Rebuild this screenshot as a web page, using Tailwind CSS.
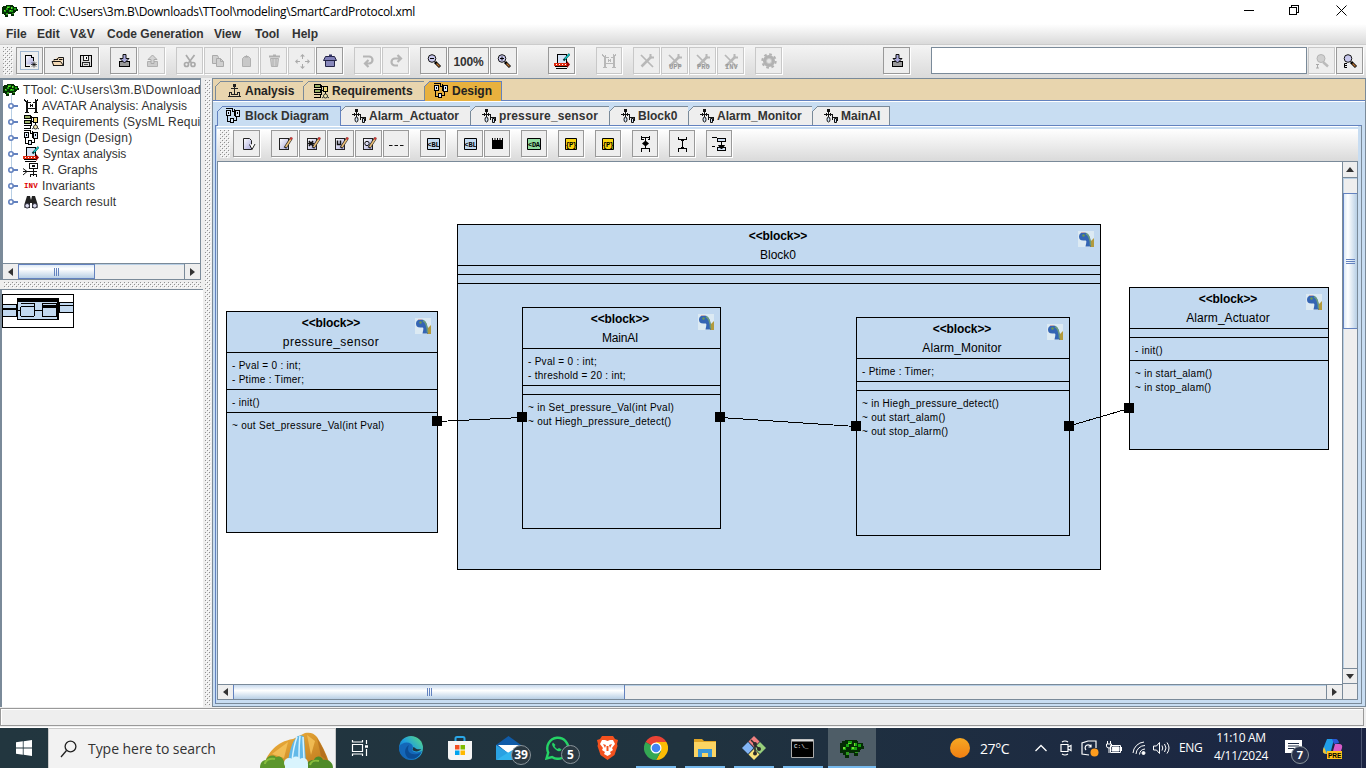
<!DOCTYPE html>
<html lang="en">
<head>
<meta charset="utf-8">
<title>TTool</title>
<script src="https://cdn.jsdelivr.net/npm/@tailwindcss/browser@4"></script>
</head>
<body class="w-[1366px] h-[768px] overflow-hidden bg-[#eeeeee] flex flex-col font-['Liberation_Sans',Arial,sans-serif] text-[12px] text-[#333]">

<svg width="0" height="0" class="absolute">
  <defs>
    <pattern id="bumps" width="4" height="4" patternUnits="userSpaceOnUse"><rect width="4" height="4" fill="#eee"/><rect x="0" y="0" width="1" height="1" fill="#909090"/><rect x="2" y="2" width="1" height="1" fill="#909090"/><rect x="1" y="1" width="1" height="1" fill="#fff"/><rect x="3" y="3" width="1" height="1" fill="#fff"/></pattern>
    <linearGradient id="lav" x1="0" y1="0" x2="1" y2="1"><stop offset="0" stop-color="#fff"/><stop offset="1" stop-color="#aaaadd"/></linearGradient>
    <linearGradient id="edge" x1="0" y1="1" x2="1" y2="0"><stop offset="0" stop-color="#0c59a4"/><stop offset=".5" stop-color="#1e9de0"/><stop offset="1" stop-color="#5fe07a"/></linearGradient>
    <linearGradient id="rock" x1="0" y1="0" x2="1" y2="1"><stop offset="0" stop-color="#f5b73f"/><stop offset="1" stop-color="#b9741b"/></linearGradient>
    <linearGradient id="sun" x1="0" y1="0" x2="0" y2="1"><stop offset="0" stop-color="#f7a823"/><stop offset="1" stop-color="#f07f13"/></linearGradient>
  </defs>
  <symbol id="turtle" viewBox="0 0 16 14"><g shape-rendering="crispEdges"><path d="M4 1h7v1h1v1h3v2h1v2h-2v1h-1v1h-1v3h-3v-2h-3v3h-3v-2h-1v-1h-3v-2h-1v-3h1v-2h2v-1h2z" fill="#042c04"/><path d="M5 2h3v2h-2v2h-2v-2h1zM9 3h2v2h-2zM7 6h4v2h-4zM2 6h2v2h-2zM12 4h2v2h-2z" fill="#17a010"/><path d="M5 3h2v1h-2zM9 3h1v2h-1zM8 6h1v1h-1zM2 6h1v1h-1z" fill="#6fe030"/><path d="M4 9h2v2h-2zM10 9h2v1h-2z" fill="#2c9a1c"/></g></symbol>
  <symbol id="new" viewBox="0 0 16 16"><path d="M3.500 2.500h6l2 2v7h-8z" fill="url(#lav)"/><g fill="none" stroke="#000" shape-rendering="crispEdges"><path d="M8 13.500H3.500V2.500h6v2h2V8"/></g><path d="M12 8.500v6M9 11.500h6M9.900 9.400l4.200 4.200M14.100 9.400l-4.200 4.200" stroke="#000" stroke-width=".7"/></symbol>
  <symbol id="open" viewBox="0 0 16 16"><path d="M2.500 12.500v-5l3-1 1-2h6v8z" fill="#f3d9b5"/><path d="M3 12.500h10.500v-8h-5l-1 1.500M3.500 12l-1.500-3.500h8.500l3 4M4 7.500V6.500h4M9 6.500h3.500" fill="none" stroke="#000" stroke-width=".9"/></symbol>
  <symbol id="save" viewBox="0 0 16 16"><g shape-rendering="crispEdges"><path d="M2 2h11l1 1v11h-12z" fill="#000"/><path d="M3 3h2v5h6v-5h2v10h-10z" fill="#ddd"/><path d="M5 3h1v4h-1zM10 3h1v4h-1zM5 7h6v1h-6zM4 9h8v1h-8zM4 9h1v4h-1zM11 9h1v4h-1z" fill="#222"/><path d="M6 3h4v4h-4z" fill="#f4f4f4"/><path d="M8 4h1v2h-1z" fill="#000"/><path d="M6 11h4v1h-4z" fill="#555"/></g></symbol>
  <symbol id="import" viewBox="0 0 16 16"><path d="M3.500 8.500h10v5h-10z" fill="#999" stroke="#000" shape-rendering="crispEdges"/><path d="M7 1.500h3v4h3L8.500 10 4 5.500h3z" fill="#aaaadd" stroke="#111"/></symbol>
  <symbol id="export" viewBox="0 0 16 16"><path d="M3.500 8.500h10v5h-10z" fill="#ccc" stroke="#b0b0b0"/><path d="M7 10.500h3v-4h3L8.500 2 4 6.500h3z" fill="#d4d4d4" stroke="#aaa"/></symbol>
  <symbol id="cut" viewBox="0 0 16 16"><g fill="none" stroke="#aaa" stroke-width="1.700"><path d="M4 2l5.500 8M12.500 2L6.500 10"/><circle cx="4.500" cy="11.500" r="2"/><circle cx="11" cy="11.500" r="2"/></g></symbol>
  <symbol id="copy" viewBox="0 0 16 16"><g fill="#d0d0d0" stroke="#aaa"><path d="M2.500 2.500h5l1 2v6h-6z"/><path d="M6.500 5.500h4l3 3v5h-7z"/><path d="M10.500 5.500v3h3" fill="none"/></g></symbol>
  <symbol id="paste" viewBox="0 0 16 16"><path d="M4.500 5.500l2-2h4l2 2v8h-8z" fill="#c8c8c8" stroke="#b0b0b0"/><path d="M6.500 4.500l2-2.500 2 2.500z" fill="#aaa"/></symbol>
  <symbol id="trash" viewBox="0 0 16 16"><path d="M3 3.500h11M7 2.500h3" stroke="#b0b0b0" stroke-width="2"/><path d="M4.500 5.500h8l-1 8h-6zM7 6v7M10 6v7" fill="#d0d0d0" stroke="#b0b0b0"/></symbol>
  <symbol id="move" viewBox="0 0 16 16"><path d="M8.500 1l2.500 2.500h-2v2.500h-1V3.500H6zM8.500 16L6 13.500h2V11h1v2.500h2zM1 8.500L3.500 6v2H6v1H3.500v2zM16 8.500L13.500 11V9H11V8h2.500V6z" fill="#aaa"/></symbol>
  <symbol id="house" viewBox="0 0 16 16"><path d="M3.500 7.500h9v6h-9z" fill="#8888bb" stroke="#222244"/><path d="M3.500 3.500h9l2 4H1.500z" fill="#8080b8" stroke="#222244"/><path d="M7 1.500h3v2H7z" fill="#333366"/></symbol>
  <symbol id="undo" viewBox="0 0 16 16"><path d="M3 3.500h6a3.500 3.500 0 0 1 0 7H6M8.500 7L5 10.500l3.500 3.500" fill="none" stroke="#b5b5b5" stroke-width="2.200"/></symbol>
  <symbol id="redo" viewBox="0 0 16 16"><path d="M10 12.500H7a3.500 3.500 0 0 1 0-7h5M9.500 2L13 5.500 9.500 9" fill="none" stroke="#b5b5b5" stroke-width="2.200"/></symbol>
  <symbol id="lens" viewBox="0 0 16 16"><path d="M9 9l5 5" stroke="#000" stroke-width="3"/><path d="M10.500 10.500l3 3" stroke="#b87333" stroke-width="1.400"/><circle cx="6" cy="5.500" r="3.800" fill="#c8c8ee" stroke="#111"/></symbol>
  <symbol id="lensg" viewBox="0 0 16 16"><path d="M9 9l5 4.500" stroke="#bbb" stroke-width="2.500"/><circle cx="7" cy="5.500" r="4" fill="#d0d0d0" stroke="#b5b5b5"/></symbol>
  <symbol id="syntax" viewBox="0 0 16 16"><g shape-rendering="crispEdges"><path d="M3.500 1.500h9v9h-9z" fill="#d5e3f5" stroke="#000"/><path d="M0 10h14v3h-14z" fill="#e02a10"/><path d="M1 13h13v1h-13zM2 15h11v1h-11z" fill="#000"/><path d="M2 11h1v1h-1zM5 11h1v1h-1zM8 11h1v1h-1zM11 11h1v1h-1z" fill="#fff"/></g><path d="M13 8l3 3.500-3 3.500z" fill="#900"/><path d="M15.500 1L9.500 7.500" stroke="#033" stroke-width="2"/><path d="M15.500 1l-4.500 5" stroke="#12c4c4" stroke-width="1.500"/></symbol>
  <symbol id="gate" viewBox="0 0 16 16"><g fill="currentColor" shape-rendering="crispEdges"><path d="M3 4h2v11h-2zM12 4h2v11h-2zM1 1h1v1h1v1h1v-1h1v2h-3v-1h-1zM12 1h1v1h1v-1h1v2h-1v1h-2zM2 14h4v1h-4zM11 14h4v1h-4zM5 10h7v1h-7zM5 4h3v1h-3zM7 6h1v3h-1zM9 6h1v3h-1zM8 7h1v1h-1zM10 4h2v1h-2z"/></g></symbol>
  <symbol id="tools" viewBox="0 0 16 16"><g fill="none" stroke="#b8b8b8"><path d="M2 2l12 12" stroke-width="1.700"/><path d="M12.500 3.500L2.500 13.500" stroke-width="2.500"/><path d="M11.500 1v3.500H15" stroke-width="2"/></g></symbol>
  <symbol id="gear" viewBox="0 0 16 16"><circle cx="8" cy="8" r="4.500" fill="#c8c8c8" stroke="#b2b2b2" stroke-width="3"/><circle cx="8" cy="8" r="6.700" fill="none" stroke="#b2b2b2" stroke-width="2" stroke-dasharray="2.700 2.560"/><circle cx="8" cy="8" r="2" fill="#e4e4e4"/></symbol>
  <symbol id="req" viewBox="0 0 16 16"><g shape-rendering="crispEdges" stroke="#000"><path d="M1.500 1.500h6v3h-6zM1.500 6.500h6v3h-6z" fill="#9bb06a"/><path d="M1 11.500h6v3h-6M8.500 2v10" fill="none"/><path d="M10.500 3.500h4v5h-4z" fill="#f0d878"/><path d="M8 3.500h2M8 7.500h2M12.500 9v2" fill="none"/></g><circle cx="12.500" cy="13" r="2" fill="#f6e9b0" stroke="#333"/><path d="M9 15l2-1.500M16 15l-2-1.500" stroke="#333"/></symbol>
  <symbol id="design" viewBox="0 0 16 16"><g shape-rendering="crispEdges" stroke="#000" fill="#dbe8f8"><path d="M1.500 2.500h4v5h-4zM10.500 2.500h4v6h-4zM5.500 10.500h3v4h-3z"/><path d="M1 .5h6v3M3.500 4v2M12.500 4v2M7 3.500h3M9.500 1v7M11.500 9v3h-3M2.500 8v5h3M14.500 8v1" fill="none"/></g></symbol>
  <symbol id="analysis" viewBox="0 0 16 16"><g fill="none" stroke="#222" shape-rendering="crispEdges"><path d="M8.500 2v9M5 5.500h7"/><path d="M3.500 13.500v-4h2v2h6v-2h2v4zM2 13.500h13"/></g><path d="M7 1h3v3h-3z" fill="#222"/></symbol>
  <symbol id="smd" viewBox="0 0 16 16"><g shape-rendering="crispEdges"><path d="M4 1h3v3h-3zM5 3h1v7h-1zM1 6h9v1h-9zM3 5h1v3h-1zM7 5h1v3h-1zM9 7h1v2h-1zM9 9h6v1h-6zM14 9h1v4h-1zM9 10h1v2h-1z" fill="#111"/></g><ellipse cx="5.500" cy="11.500" rx="1.500" ry="2.500" fill="#cfe0f4" stroke="#111"/><path d="M11.500 10.500h2v4h-2z" fill="#cfe0f4" stroke="#111"/></symbol>
  <symbol id="graph" viewBox="0 0 16 16"><g fill="none" stroke="#111"><path d="M6.500 1.500h8v5h-8zM10.500 7v7M5 9.500h9M7.500 15v-2.500h6v2.500" shape-rendering="crispEdges"/><path d="M0 6.500l4 3-4 3.500M0 9.500h5"/></g><path d="M9 3h3v2h-3z" fill="#111"/></symbol>
  <symbol id="bino" viewBox="0 0 16 16"><path d="M4 2h3l1 4 1-4h3l2.500 8v4H9V9H7v5H1.500V10z" fill="#222"/><circle cx="4.200" cy="11.800" r="2.300" fill="#dde" stroke="#334"/><circle cx="11.800" cy="11.800" r="2.300" fill="#dde" stroke="#334"/></symbol>
  <symbol id="knob" viewBox="0 0 16 16"><path d="M5 8h6" stroke="#6382bf" stroke-width="2"/><circle cx="4" cy="8" r="2.200" fill="#fff" stroke="#6382bf" stroke-width="1.600"/></symbol>
  <symbol id="doccheck" viewBox="0 0 16 16"><path d="M3.500 2.500h6l2 2v9h-8z" fill="url(#lav)" stroke="#222"/><path d="M9.500 8.500l2.500 5L15 8" fill="#fff" stroke="#222"/></symbol>
  <symbol id="edit" viewBox="0 0 16 16"><path d="M2.500 2.500h9v11h-9z" fill="url(#lav)" stroke="#222" shape-rendering="crispEdges"/><path d="M14.500 2L8 12" stroke="#222" stroke-width="3"/><path d="M14 3L8.700 11" stroke="#ecc078" stroke-width="1.600"/><path d="M15 1.500l-1.500 2" stroke="#c33" stroke-width="2"/></symbol>
  <symbol id="dots" viewBox="0 0 16 16"><path d="M1 9.500h3.500M6.500 9.500H10M12 9.500h3.500" stroke="#111"/></symbol>
  <symbol id="libbox" viewBox="0 0 16 16"><path d="M3 2v2M5.500 2v2M8 2v2M10.500 2v2M13 2v2" stroke="#000" transform="translate(.5 0)"/><path d="M3 4h11v9h-11z" fill="#000"/></symbol>
  <symbol id="compo" viewBox="0 0 16 16"><g fill="none" stroke="#000" shape-rendering="crispEdges"><path d="M4.500 0v3.500h2M12.500 0v3.500h-2M4.500 16v-3.500h2M12.500 16v-3.500h-2M4 1.500h8M5 12.500h8M8.500 2v11"/></g><path d="M5 7.500L8.500 4.500 12 7.500 8.500 10.500z" fill="#000"/></symbol>
  <symbol id="link" viewBox="0 0 16 16"><g fill="none" stroke="#000" shape-rendering="crispEdges"><path d="M4.500 1v2.500h8V1M4.500 16v-3.500h8V16M8.500 3v10"/></g><path d="M7 3h3v2h-3zM7 11h3v2h-3z" fill="#000"/></symbol>
  <symbol id="port" viewBox="0 0 16 16"><g fill="#cfe0f4" stroke="#000" shape-rendering="crispEdges"><path d="M6.500 2.500h8v3h-8zM6.500 11.500h8v3h-8zM1 1.500h3M1 10.500h3M2 1.500h4"/></g><path d="M10.500 6v7M7.500 9.500l3 3.500 3-3.500z" stroke="#000" fill="#000"/></symbol>
  <symbol id="dino" viewBox="0 0 16 16"><path d="M0 0h16v16h-16z" fill="#dceaf3"/><path d="M12 11l4-4v9h-4z" fill="#b39a3c"/><path d="M1 5.500C1 2 4 1 6.500 1.500c4 .5 6 3.500 6.500 14H7.500C8.500 11 9 9.500 7 9.500 2.500 10 1 8.500 1 5.500z" fill="#3465b4"/><path d="M8 2.500c3.500 2 4.500 5 4.500 12" fill="none" stroke="#6a9b7d" stroke-width="1.500"/><circle cx="5.500" cy="4.500" r="1.200" fill="#6f9a4a"/><path d="M3 1.500h4" stroke="#d0a7a7" stroke-width=".8"/></symbol>
</svg>

<!-- window title -->
<header class="h-6 shrink-0 bg-white flex items-center pl-[2px] text-black">
  <svg class="w-4 h-[14px] mr-[5px] mb-[2px]"><use href="#turtle"/></svg>
  <span class="font-['Open_Sans','Noto_Sans',sans-serif] text-[12px] tracking-[-0.28px] whitespace-nowrap">TTool: C:\Users\3m.B\Downloads\TTool\modeling\SmartCardProtocol.xml</span>
  <div class="ml-auto flex items-center pb-[4px] pr-[19px]">
    <svg class="mr-[35px]" width="10" height="11"><path d="M0 5.500h10" stroke="#000"/></svg>
    <svg class="mr-[36px]" width="11" height="11" fill="none" stroke="#000" shape-rendering="crispEdges"><path d="M.5 2.500h7v7h-7zM2.500 2V.5h7v7H8"/></svg>
    <svg width="11" height="11" stroke="#000"><path d="M.5.5l10 10M10.500.5l-10 10"/></svg>
  </div>
</header>

<!-- menu -->
<nav class="h-[21px] shrink-0 border-b border-[#ccc] bg-linear-to-b from-white to-[#dadada] font-bold flex items-center pl-[6px] whitespace-nowrap">
  <span class="w-[31px]">File</span><span class="w-[33px]">Edit</span><span class="w-[37px]">V&amp;V</span><span class="w-[107px]">Code Generation</span><span class="w-[41px]">View</span><span class="w-[37px]">Tool</span><span>Help</span>
</nav>

<!-- main toolbar -->
<div class="h-[33px] shrink-0 bg-linear-to-b from-[#f4f4f4] to-[#dadada] flex items-start pt-[2px] gap-px [&>b]:h-[27px] [&>b]:w-[27px] [&>b]:shrink-0 [&>b]:flex [&>b]:items-center [&>b]:justify-center [&>b]:border [&>b]:border-[#999] [&>b]:bg-[#eee] [&>b]:shadow-[1px_1px_0_#fff] [&>b.off]:border-[#c8c8c8] [&_svg]:size-4 [&_svg]:overflow-visible [&>i]:shrink-0 [&>i]:w-[9px]">
  <div class="w-[15px] h-[28px] shrink-0 pl-[3px]"><svg class="w-[10px]! h-[28px]!"><rect width="10" height="28" fill="url(#bumps)"/></svg></div>
  <b><span class="size-[19px] border border-[#9fb6d0] flex items-center justify-center"><svg><use href="#new"/></svg></span></b>
  <b><svg><use href="#open"/></svg></b>
  <b><svg><use href="#save"/></svg></b><i></i>
  <b><svg><use href="#import"/></svg></b>
  <b class="off"><svg><use href="#export"/></svg></b><i></i>
  <b class="off"><svg><use href="#cut"/></svg></b>
  <b class="off"><svg><use href="#copy"/></svg></b>
  <b class="off"><svg><use href="#paste"/></svg></b>
  <b class="off"><svg><use href="#trash"/></svg></b>
  <b class="off"><svg><use href="#move"/></svg></b>
  <b><svg><use href="#house"/></svg></b><i></i>
  <b class="off"><svg><use href="#undo"/></svg></b>
  <b class="off"><svg><use href="#redo"/></svg></b><i></i>
  <b><svg viewBox="0 0 16 16"><use href="#lens"/><path d="M4 5.500h4" stroke="#000"/></svg></b>
  <b class="w-[41px]! text-[12px] tracking-[-0.2px] pt-[2px]">100%</b>
  <b><svg viewBox="0 0 16 16"><use href="#lens"/><path d="M4 5.500h4M6 3.500v4" stroke="#000"/></svg></b><i class="w-[29px]!"></i>
  <b><svg><use href="#syntax"/></svg></b><i class="w-[19px]!"></i>
  <b class="off w-[26px]! text-[#b8b8b8]"><svg><use href="#gate"/></svg></b><i></i>
  <b class="off"><svg><use href="#tools"/></svg></b>
  <b class="off"><svg viewBox="0 0 16 16"><use href="#tools"/><text x="2" y="15.500" font-family="Liberation Mono" font-size="7" fill="#999">UPP</text></svg></b>
  <b class="off"><svg viewBox="0 0 16 16"><use href="#tools"/><text x="2" y="15.500" font-family="Liberation Mono" font-size="7" fill="#999">PRO</text></svg></b>
  <b class="off"><svg viewBox="0 0 16 16"><use href="#tools"/><text x="2" y="15.500" font-family="Liberation Mono" font-size="7" fill="#999">INV</text></svg></b><i></i>
  <b class="off"><svg><use href="#gear"/></svg></b><i class="w-[99px]!"></i>
  <b><svg><use href="#import"/></svg></b><i class="w-[19px]!"></i>
  <div class="w-[376px] h-[27px] shrink-0 bg-white border border-[#7a8a99]"></div>
  <b class="off"><svg viewBox="0 0 16 16"><use href="#lensg"/><path d="M2 11.500h3M3.500 11v4M2 15h3" stroke="#aaa"/></svg></b>
  <b><svg viewBox="0 0 16 16"><use href="#lens"/><path d="M5 10.500H2.500v4H5M2.500 12.500H5" stroke="#000" fill="none"/></svg></b>
</div>

<main class="h-[629px] shrink-0 flex">
  <!-- project tree and overview -->
  <aside class="w-[203px] flex flex-col shrink-0">
    <div class="h-[202px] w-[201px] border-l-[3px] border-t-2 border-r border-b border-[#7a8a99] bg-white flex flex-col">
      <div class="flex-1 overflow-hidden pt-[2px] whitespace-nowrap tracking-[0.1px] [&>div]:h-4 [&>div]:flex [&>div]:items-center [&_svg]:size-4 [&_svg]:shrink-0 [&_span]:ml-[3px]">
        <div><svg><use href="#turtle"/></svg><span class="ml-[4px]! tracking-[0.25px]">TTool: C:\Users\3m.B\Download</span></div>
        <div class="pl-[4px] relative before:absolute before:left-[8px] before:top-[-4px] before:h-[106px] before:w-px before:bg-[#b8cfe5] [&>svg]:relative"><svg><use href="#knob"/></svg><svg class="text-[#111]"><use href="#gate"/></svg><span>AVATAR Analysis: Analysis</span></div>
        <div class="pl-[4px] [&>svg]:relative"><svg><use href="#knob"/></svg><svg><use href="#req"/></svg><span class="tracking-[0.22px]">Requirements (SysML Requi</span></div>
        <div class="pl-[4px] [&>svg]:relative"><svg><use href="#knob"/></svg><svg><use href="#design"/></svg><span class="tracking-[0.3px]">Design (Design)</span></div>
        <div class="pl-[4px] [&>svg]:relative"><svg><use href="#knob"/></svg><svg><use href="#syntax"/></svg><span class="ml-[4px]! tracking-[0px]">Syntax analysis</span></div>
        <div class="pl-[4px] [&>svg]:relative"><svg><use href="#knob"/></svg><svg><use href="#graph"/></svg><span>R. Graphs</span></div>
        <div class="pl-[4px] [&>svg]:relative"><svg><use href="#knob"/></svg><svg viewBox="0 0 16 16"><text x="1" y="9.500" font-family="Liberation Mono" font-weight="bold" font-size="7.500" fill="#d00">INV</text></svg><span>Invariants</span></div>
        <div class="pl-[4px] [&>svg]:relative"><svg><use href="#knob"/></svg><svg><use href="#bino"/></svg><span class="ml-[4px]! tracking-[0.2px]">Search result</span></div>
      </div>
      <div class="h-[16px] border-t border-[#7a8a99] flex bg-[#eee]">
        <div class="w-[15px] flex items-center justify-center"><svg width="5" height="8"><path d="M5 0v8L0 4z" fill="#333"/></svg></div>
        <div class="w-[77px] border border-[#6382bf] bg-linear-to-b from-[#dce9f6] via-white via-30% to-[#b8cfe5] flex items-center justify-center gap-px"><i class="w-px h-2 bg-[#6382bf]"></i><i class="w-px h-2 bg-[#6382bf]"></i><i class="w-px h-2 bg-[#6382bf]"></i></div>
        <div class="flex-1 border-t border-[#b8cfe5]"></div>
        <div class="w-[16px] border-l border-[#7a8a99] flex items-center justify-center"><svg width="5" height="8"><path d="M0 0v8l5-4z" fill="#333"/></svg></div>
      </div>
    </div>
    <div class="h-[9px] pl-1 pt-[2px]"><svg class="block" width="197" height="6"><rect width="197" height="6" fill="url(#bumps)"/></svg></div>
    <div class="flex-1 border-t border-l-2 border-[#7a8a99] bg-white pt-[4px]">
      <svg class="block" width="72" height="34" shape-rendering="crispEdges"><rect x=".5" y=".5" width="71" height="33" fill="#fff" stroke="#000"/><g fill="#c2d9f0" stroke="#000"><path d="M.5 10.500h14v12h-14zM15.500 4.500h41v21h-41zM40.500 9.500h14v13h-14zM57.500 8.500h14v10h-14z"/></g><path d="M15 5h42v3h-42zM0 14h14v2h-14zM40 11h15v3h-15zM55 4h2v22h-2z"/><path d="M0 10.500h14M19 9.500h13M19 12.500h13M18.500 13v9M32.500 9v13M19 22.500h13M14 16.500h5M32 16.500h8M55 15.500h3M58 11.500h14" stroke="#000" fill="none"/></svg>
    </div>
  </aside>
  <div class="w-[9px] shrink-0 pl-[2px] pt-[2px]"><svg class="block" width="6" height="625"><rect width="6" height="625" fill="url(#bumps)"/></svg></div>

  <section class="flex-1 border border-[#7a8a99] bg-[#c8ddf2] flex flex-col">
    <!-- diagram family tabs -->
    <div class="h-[22px] shrink-0 bg-[#e8d5ae] border-b border-[#6382bf] pl-[2px] pt-[2px] flex text-[12px] font-bold text-[#222] [&>div]:relative [&>div]:flex [&>div]:items-center [&>div]:border-t [&>div]:border-r [&>div]:border-[#7a8a99] [&>div]:whitespace-nowrap">
      <div class="w-[89px] pl-[10px] gap-[3px] border-l"><svg class="absolute -left-px -top-px" width="6" height="6"><path d="M0 0h6L0 6z" fill="#e8d5ae"/><path d="M0 6l6-6" stroke="#7a8a99"/></svg><svg width="16" height="16"><use href="#analysis"/></svg>Analysis</div>
      <div class="w-[121px] pl-[9px] gap-[3px] tracking-[0.05px]"><svg class="absolute -left-px -top-px" width="6" height="6"><path d="M0 0h6L0 6z" fill="#e8d5ae"/><path d="M0 6l6-6" stroke="#7a8a99"/></svg><svg width="16" height="16"><use href="#req"/></svg>Requirements</div>
      <div class="w-[77px] pl-[8px] pb-px gap-[3px] bg-[#e8b13e] border-[#6382bf]! -mb-px"><svg class="absolute -left-px -top-px" width="6" height="6"><path d="M0 0h6L0 6z" fill="#e8d5ae"/><path d="M0 6l6-6" stroke="#6382bf"/></svg><svg width="16" height="16"><use href="#design"/></svg>Design</div>
    </div>
    <!-- diagram tabs -->
    <div class="h-[24px] shrink-0 border-t border-white pt-[4px] pl-[4px] flex text-[12px] font-bold text-[#333] [&>div]:relative [&>div]:flex [&>div]:items-center [&>div]:border-t [&>div]:border-r [&>div]:border-[#7a8a99] [&>div]:bg-[#eee] [&>div]:pl-[10px] [&>div]:gap-[2px] [&>div]:whitespace-nowrap">
      <div class="w-[124px] border-l border-[#6382bf]! bg-[#c8ddf2]! pl-[7px]! gap-[4px]! pb-px z-10 -mb-px"><svg class="absolute -left-px -top-px" width="6" height="6"><path d="M0 0h6L0 6z" fill="#c8ddf2"/><path d="M0 6l6-6" stroke="#6382bf"/></svg><svg width="16" height="16"><use href="#design"/></svg>Block Diagram</div>
      <div class="w-[130px]"><svg class="absolute -left-px -top-px" width="6" height="6"><path d="M0 0h6L0 6z" fill="#c8ddf2"/><path d="M0 6l6-6" stroke="#7a8a99"/></svg><svg width="16" height="16"><use href="#smd"/></svg>Alarm_Actuator</div>
      <div class="w-[139px] tracking-[0.15px]"><svg class="absolute -left-px -top-px" width="6" height="6"><path d="M0 0h6L0 6z" fill="#c8ddf2"/><path d="M0 6l6-6" stroke="#7a8a99"/></svg><svg width="16" height="16"><use href="#smd"/></svg>pressure_sensor</div>
      <div class="w-[79px]"><svg class="absolute -left-px -top-px" width="6" height="6"><path d="M0 0h6L0 6z" fill="#c8ddf2"/><path d="M0 6l6-6" stroke="#7a8a99"/></svg><svg width="16" height="16"><use href="#smd"/></svg>Block0</div>
      <div class="w-[124px]"><svg class="absolute -left-px -top-px" width="6" height="6"><path d="M0 0h6L0 6z" fill="#c8ddf2"/><path d="M0 6l6-6" stroke="#7a8a99"/></svg><svg width="16" height="16"><use href="#smd"/></svg>Alarm_Monitor</div>
      <div class="w-[77px]"><svg class="absolute -left-px -top-px" width="6" height="6"><path d="M0 0h6L0 6z" fill="#c8ddf2"/><path d="M0 6l6-6" stroke="#7a8a99"/></svg><svg width="16" height="16"><use href="#smd"/></svg>MainAI</div>
    </div>
    <div class="h-[579px] ml-[2px] mr-[3px] border border-[#6382bf] border-r-[#7a8a99] border-b-[#7a8a99] flex flex-col pl-px pr-[3px]">
      <div class="h-[3px] shrink-0 border-t border-white"></div>
      <div class="h-[32px] shrink-0 bg-linear-to-b from-white to-[#dadada] flex pt-[1px] gap-px [&>b]:h-[27px] [&>b]:w-[26px] [&>b]:shrink-0 [&>b]:flex [&>b]:items-center [&>b]:justify-center [&>b]:border [&>b]:border-[#999] [&>b]:bg-[#eee] [&>b]:shadow-[1px_1px_0_#fff] [&_svg]:size-4 [&>i]:shrink-0 [&>i]:w-[9px]">
        <div class="w-[15px] shrink-0 pl-[3px]"><svg class="w-[10px]! h-[28px]!"><rect width="10" height="28" fill="url(#bumps)"/></svg></div>
        <b class="w-[27px]!"><svg class="ml-[2px]"><use href="#doccheck"/></svg></b><i></i>
        <b class="w-[27px]!"><svg><use href="#edit"/></svg></b>
        <b class="w-[27px]!"><svg viewBox="0 0 16 16"><use href="#edit"/><path d="M4 5l4 5M8 5l-4 5M3 7.500h6" stroke="#111" stroke-width="1.500"/></svg></b>
        <b class="w-[27px]!"><svg viewBox="0 0 16 16"><use href="#edit"/><path d="M4.500 4.500v4h3v-4" stroke="#111" fill="none" stroke-width="1.500"/></svg></b>
        <b class="w-[27px]!"><svg viewBox="0 0 16 16"><use href="#edit"/><circle cx="6" cy="7.500" r="2.200" stroke="#111" fill="none"/></svg></b>
        <b><svg><use href="#dots"/></svg></b><i></i>
        <b><svg viewBox="0 0 16 16"><path d="M2.500 2.500h12v11h-12z" fill="#c2d9f0" stroke="#000"/><text x="2.600" y="10.500" font-family="Liberation Mono" font-weight="bold" font-size="7" textLength="12">&lt;BL</text></svg></b><i></i>
        <b><svg viewBox="0 0 16 16"><path d="M2.500 2.500h12v11h-12z" fill="#c2d9f0" stroke="#000"/><text x="2.600" y="10.500" font-family="Liberation Mono" font-weight="bold" font-size="7" textLength="12">&lt;BL</text></svg></b>
        <b><svg><use href="#libbox"/></svg></b><i></i>
        <b><svg viewBox="0 0 16 16"><path d="M1.500 2.500h13v11h-13z" fill="#90dca0" stroke="#000"/><text x="2" y="10.500" font-family="Liberation Mono" font-weight="bold" font-size="7" textLength="12">&lt;DA</text></svg></b><i></i>
        <b><svg viewBox="0 0 16 16"><path d="M2.500 2.500h11v11h-11z" fill="#f8d410" stroke="#000"/><text x="2.600" y="10.500" font-family="Liberation Mono" font-weight="bold" font-size="7" textLength="11">{P}</text></svg></b><i></i>
        <b><svg viewBox="0 0 16 16"><path d="M2.500 2.500h11v11h-11z" fill="#f8d410" stroke="#000"/><text x="2.600" y="10.500" font-family="Liberation Mono" font-weight="bold" font-size="7" textLength="11">{P}</text></svg></b><i></i>
        <b><svg><use href="#compo"/></svg></b><i></i>
        <b><svg><use href="#link"/></svg></b><i></i>
        <b><svg><use href="#port"/></svg></b>
      </div>
      <div class="flex-1 border border-[#7a8a99] flex flex-col bg-[#eee]">
        <div class="h-[522px] flex">
          <!-- block diagram canvas -->
          <div class="w-[1124px] bg-white relative text-black overflow-hidden [&_h3]:font-bold [&_h3]:text-[12px] [&_h3]:leading-[19px] [&_h3]:tracking-[-0.1px] [&_h4]:text-[12px] [&_h4]:leading-[19px] [&_p]:text-[10px] [&_p]:leading-[14px] [&_p]:tracking-[0.28px] [&_p]:whitespace-pre">
            <div class="absolute left-[239px] top-[62px] w-[644px] h-[346px] border border-black bg-[#c2d9f0] text-center">
              <svg class="absolute right-[6px] top-[6px] size-4"><use href="#dino"/></svg>
              <div class="h-[41px] border-b border-black pt-[2px] pr-[2px]"><h3>&lt;&lt;block&gt;&gt;</h3><h4>Block0</h4></div><div class="h-[9px] border-b border-black"></div><div class="h-[9px] border-b border-black"></div>
            </div>
            <div class="absolute left-[8px] top-[149px] w-[212px] h-[222px] border border-black bg-[#c2d9f0]">
              <svg class="absolute right-[6px] top-[6px] size-4"><use href="#dino"/></svg>
              <div class="h-[41px] border-b border-black pt-[2px] text-center pr-[2px]"><h3>&lt;&lt;block&gt;&gt;</h3><h4 class="tracking-[0.47px]">pressure_sensor</h4></div>
              <div class="h-[37px] border-b border-black pl-[5px] pt-[6px]"><p>- Pval = 0 : int;</p><p>- Ptime : Timer;</p></div>
              <div class="h-[23px] border-b border-black pl-[5px] pt-[6px]"><p>- init()</p></div>
              <div class="pl-[5px] pt-[6px]"><p>~ out Set_pressure_Val(int Pval)</p></div>
            </div>
            <div class="absolute left-[304px] top-[145px] w-[199px] h-[222px] border border-black bg-[#c2d9f0]">
              <svg class="absolute right-[6px] top-[6px] size-4"><use href="#dino"/></svg>
              <div class="h-[41px] border-b border-black pt-[2px] text-center pr-[3px]"><h3>&lt;&lt;block&gt;&gt;</h3><h4 class="tracking-[-0.2px]">MainAI</h4></div>
              <div class="h-[37px] border-b border-black pl-[5px] pt-[6px]"><p>- Pval = 0 : int;</p><p>- threshold = 20 : int;</p></div>
              <div class="h-[9px] border-b border-black"></div>
              <div class="pl-[5px] pt-[6px]"><p>~ in Set_pressure_Val(int Pval)</p><p>~ out Hiegh_pressure_detect()</p></div>
            </div>
            <div class="absolute left-[638px] top-[155px] w-[214px] h-[219px] border border-black bg-[#c2d9f0]">
              <svg class="absolute right-[6px] top-[6px] size-4"><use href="#dino"/></svg>
              <div class="h-[41px] border-b border-black pt-[2px] text-center pr-[2px]"><h3>&lt;&lt;block&gt;&gt;</h3><h4 class="tracking-[0.1px]">Alarm_Monitor</h4></div>
              <div class="h-[23px] border-b border-black pl-[5px] pt-[6px]"><p>- Ptime : Timer;</p></div>
              <div class="h-[9px] border-b border-black"></div>
              <div class="pl-[5px] pt-[6px]"><p>~ in Hiegh_pressure_detect()</p><p>~ out start_alam()</p><p>~ out stop_alarm()</p></div>
            </div>
            <div class="absolute left-[911px] top-[125px] w-[200px] h-[163px] border border-black bg-[#c2d9f0]">
              <svg class="absolute right-[6px] top-[6px] size-4"><use href="#dino"/></svg>
              <div class="h-[41px] border-b border-black pt-[2px] text-center pr-[2px]"><h3>&lt;&lt;block&gt;&gt;</h3><h4 class="tracking-[0.05px]">Alarm_Actuator</h4></div>
              <div class="h-[9px] border-b border-black"></div>
              <div class="h-[23px] border-b border-black pl-[5px] pt-[6px]"><p>- init()</p></div>
              <div class="pl-[5px] pt-[6px]"><p>~ in start_alam()</p><p>~ in stop_alam()</p></div>
            </div>
            <svg class="absolute inset-0" width="1124" height="522" shape-rendering="crispEdges"><path d="M219 259.500L304 255.500M502 255.500L638 264.500M851 264L911 246.500" stroke="#000" fill="none"/><path d="M214 254h10v10h-10zM299 250h10v10h-10zM497 250h10v10h-10zM633 259h10v10h-10zM846 259h10v10h-10zM906 241h10v10h-10z"/></svg>
          </div>
          <div class="w-[15px] border-l border-[#7a8a99] flex flex-col">
            <div class="h-[16px] border-b border-[#7a8a99] flex items-center justify-center"><svg width="8" height="5"><path d="M4 0l4 5H0z" fill="#333"/></svg></div>
            <div class="h-[15px] border-l border-t border-[#b8cfe5]"></div>
            <div class="h-[136px] border border-r-0 border-[#6382bf] bg-linear-to-r from-[#dce9f6] via-white via-30% to-[#b8cfe5] flex flex-col gap-px items-center justify-center"><i class="h-px w-[9px] bg-[#6382bf]"></i><i class="h-px w-[9px] bg-[#6382bf]"></i><i class="h-px w-[9px] bg-[#6382bf]"></i></div>
            <div class="flex-1 border-l border-[#b8cfe5]"></div>
            <div class="h-[16px] border-t border-b border-[#7a8a99] flex items-center justify-center"><svg width="8" height="5"><path d="M4 5l4-5H0z" fill="#333"/></svg></div>
          </div>
        </div>
        <div class="flex-1 flex">
          <div class="w-[1125px] border-t border-r border-[#7a8a99] flex">
            <div class="w-[15px] flex items-center justify-center"><svg width="5" height="8"><path d="M5 0v8L0 4z" fill="#333"/></svg></div>
            <div class="w-[392px] border-l border-r border-[#6382bf] bg-linear-to-b from-[#c8daee] via-white via-40% to-[#b8cfe5] flex items-center justify-center gap-px"><i class="w-px h-2 bg-[#6382bf]"></i><i class="w-px h-2 bg-[#6382bf]"></i><i class="w-px h-2 bg-[#6382bf]"></i></div>
            <div class="flex-1 border-t border-[#b8cfe5]"></div>
            <div class="w-[16px] border-l border-[#7a8a99] flex items-center justify-center"><svg width="5" height="8"><path d="M0 0v8l5-4z" fill="#333"/></svg></div>
          </div>
        </div>
      </div>
      <div class="h-[3px] shrink-0"></div>
    </div>
  </section>
</main>

<div class="h-[21px] shrink-0 pt-px pr-[2px] border-b border-white"><div class="h-[18px] border border-[#999] shadow-[inset_1px_1px_0_#fff]"></div></div>

<!-- taskbar -->
<footer class="h-10 shrink-0 bg-linear-to-r from-[#22363f] via-[#20333f] via-50% to-[#1b2443] flex text-white relative font-['Open_Sans','Noto_Sans',sans-serif] text-[12px] [&_svg]:shrink-0">
  <div class="w-12 flex items-center justify-center"><svg width="16" height="16" fill="#fff"><path d="M0 2.200L6.800 1.300V7.500H0zM7.600 1.200L16 0V7.500H7.600zM0 8.400H6.800V14.700L0 13.800zM7.600 8.400H16V16L7.600 14.800z"/></svg></div>
  <div class="w-[288px] bg-[#f2f2f2] border border-[#c9c9c9] border-b-0 flex items-center pl-[11px] text-[#333]">
    <svg width="17" height="18" fill="none" stroke="#222" stroke-width="1.300"><circle cx="10.500" cy="6.500" r="5.400"/><path d="M6.500 10.500L1 17"/></svg>
    <span class="ml-[11px] text-[14px] tracking-[-0.05px] whitespace-nowrap w-[172px]">Type here to search</span>
    <svg class="self-end" width="74" height="36" viewBox="0 0 74 36"><path d="M3 36C6 24 14 10 33 7l12-6c5-1 9 0 12 4 5 8 10 18 14 31z" fill="url(#rock)"/><path d="M12 22l16-12-4 16zM47 3l4 20 4-14z" fill="#f9cb62" opacity=".7"/><path d="M57 6c5 8 8 14 10 22l-6-4z" fill="#a8641a" opacity=".6"/><path d="M36 6c2-3 6-3 8-1l2 24H28C30 18 32 10 36 6z" fill="#62b9e8"/><path d="M37 5c-3 8-4 14-5 24M40 4c-1 8-1 14-1 24M43 5l1 22" stroke="#d8f3ff" stroke-width="1.500" fill="none"/><path d="M0 36c0-6 3-8 6-8 1-4 7-6 10-3 5-2 9 2 9 11z" fill="#5c962c"/><path d="M46 36c0-7 5-8 8-8 2-5 8-4 9 0 5-1 10 2 10 8z" fill="#4f8a28"/><path d="M5 32c0-4 5-6 10-5M50 33c1-4 5-5 9-4" stroke="#88bd3c" stroke-width="2" fill="none"/><g fill="#d9f4fd"><circle cx="29" cy="31" r="5"/><circle cx="36" cy="29" r="4.500"/><circle cx="43" cy="31" r="5"/><path d="M25 32h23v4H25z"/></g></svg>
  </div>
  <div class="w-12 flex items-center justify-center"><svg width="18" height="18" fill="none" stroke="#fff" stroke-width="1.200"><path d="M1.500 5.500h10v7h-10zM1.500 1v2h10V1M1.500 17v-2h10v2M15.500 1v4M15.500 10v7"/><path d="M14 7.500h3" stroke-width="2.500"/></svg></div>
  <div class="w-[54px] flex items-center justify-center"><svg width="24" height="24" viewBox="0 0 24 24"><circle cx="12" cy="12" r="12" fill="url(#edge)"/><path d="M0 11C3 5 13 5 14 11c0 1-1 2-1 3 1 3 6 3 10 1-2 5-7 9-12 8.500C4 23 0 17 0 11z" fill="#1467b8"/><path d="M9 22c-4-4-4-10 1-13-3 6 1 12 12 8-3 5-8 7-13 5z" fill="#0b4c94"/><path d="M13.500 14c0-1 .8-2 .8-3 3 1 2 3 8 2-2 3-7 3-8.800 1z" fill="#20343f"/></svg></div>
  <div class="w-[44px] flex items-center justify-center"><svg width="24" height="24" viewBox="0 0 24 24"><path d="M7.500 7V2.500q0-1.500 1.500-1.500h6q1.500 0 1.500 1.500V7" fill="none" stroke="#2aa7e8" stroke-width="2"/><path d="M0 5h24v16q0 3-3 3H3q-3 0-3-3z" fill="#f5f5f5"/><path d="M7 9h4.500v4.500H7z" fill="#f25022"/><path d="M12.500 9H17v4.500h-4.500z" fill="#7fba00"/><path d="M7 14.500h4.500V19H7z" fill="#00a4ef"/><path d="M12.500 14.500H17V19h-4.500z" fill="#ffb900"/></svg></div>
  <div class="w-[54px] relative flex items-center justify-center"><svg class="mr-[2px]" width="25" height="24"><path d="M0 9L12.500 0 25 9v14H0z" fill="#0f5ba8"/><path d="M2 9h21l-10 9z" fill="#fff"/><path d="M0 9l14 9-14 6z" fill="#2aa1e2"/><path d="M25 9L0 24h25z" fill="#32b4ee"/></svg><b class="absolute left-[29px] top-[17px] size-[20px] rounded-full bg-[#2b3942] border border-[#89939a] text-[12px] leading-[18px] text-center">39</b></div>
  <div class="w-[44px] relative"><svg class="absolute left-[9px] top-[8px]" width="24" height="24" fill="none"><path d="M1.500 22.500l1.700-6A10.500 10.500 0 1 1 7 21z" stroke="#25d366" stroke-width="2.400"/><path d="M8 6.500c-1 1-1.500 2.500 1 5.500s5 4 7 2.500c1-1 .5-1.500-2-2.500l-1.500 1c-1.500-.5-2.500-2-3-3L10.500 9z" fill="#25d366"/></svg><b class="absolute left-[25px] top-[17px] size-[19px] rounded-full bg-[#2b3942] border border-[#89939a] text-[12px] leading-[17px] text-center">5</b></div>
  <div class="w-[54px] flex items-center justify-center"><svg width="21" height="24" viewBox="0 0 21 24"><path d="M5 0h11l2 3 3 1-1 4 .5 2-3 9-7 5-7-5-3-9L1 8 0 4l3-1z" fill="#f4511e"/><path d="M5 4h3l2.500 1L13 4h3l2 4-3 4 1 2-3 2 1 2-3.500 2L7 18l1-2-3-2 1-2-3-4z" fill="#fff"/><path d="M6 8l3 1-1 3zM15 8l-3 1 1 3zM9.500 10h2v5h-2z" fill="#f4511e"/></svg></div>
  <div class="w-[44px] relative flex items-center justify-center"><svg width="24" height="24" viewBox="0 0 24 24"><path d="M12 12L1.600 6a12 12 0 0 1 20.800 0z" fill="#ea4335"/><path d="M12 12V6h10.400A12 12 0 0 1 12 24l5-9z" fill="#fbbc05"/><path d="M17 15l-5 9A12 12 0 0 1 1.600 6L12 12z" fill="#34a853"/><circle cx="12" cy="12" r="5.500" fill="#fff"/><circle cx="12" cy="12" r="4.300" fill="#4285f4"/></svg><i class="absolute bottom-0 left-[2px] w-10 h-[2px] bg-[#76b9ed]"></i></div>
  <div class="w-[54px] relative flex items-center justify-center"><svg width="22" height="20"><path d="M0 1h8l2 2h12v16H0z" fill="#e0a526"/><path d="M0 4h22v15H0z" fill="#fcd462"/><path d="M4 19v-8h14v8h-4v-4H8v4z" fill="#3b97d8"/></svg><i class="absolute bottom-0 left-[7px] w-10 h-[2px] bg-[#76b9ed]"></i></div>
  <div class="w-[44px] relative flex items-center justify-center"><svg width="24" height="24" viewBox="0 0 24 24"><path d="M12 0l5.500 5.500L12 11 6.500 5.500z" fill="#f08080"/><path d="M6 6l5.500 6L6 18l-6-6z" fill="#82b4f5"/><path d="M18 6l6 6-6 6-6-6z" fill="#98cf7c"/><path d="M12 13l5.500 5.500L12 24l-5.500-5.500z" fill="#f9e27a"/><path d="M9 4l4 4v10M13 9l4 4" stroke="#2b2b2b" stroke-width="1.500" fill="none"/><circle cx="13" cy="8" r="2" fill="#2b2b2b"/><circle cx="17" cy="13" r="2" fill="#2b2b2b"/><circle cx="13" cy="17.500" r="2" fill="#2b2b2b"/></svg><i class="absolute bottom-0 left-[2px] w-10 h-[2px] bg-[#76b9ed]"></i></div>
  <div class="w-[52px] relative flex items-center justify-center"><svg width="23" height="19"><path d="M.5.5h22v18H.5z" fill="#000" stroke="#aaa"/><path d="M1 1.500h21" stroke="#ddd" stroke-width="2"/><text x="3" y="9" font-size="6" font-family="Liberation Mono" fill="#fff">C:\_</text></svg><i class="absolute bottom-0 left-[7px] w-10 h-[2px] bg-[#76b9ed]"></i></div>
  <div class="w-12 relative bg-[#4e5d67] flex items-center justify-center"><svg width="24" height="21"><use href="#turtle"/></svg><i class="absolute bottom-0 left-0 w-12 h-[2px] bg-[#76b9ed]"></i></div>
  <div class="w-[74px] shrink-0"></div>
  <div class="flex items-center shrink-0"><svg width="20" height="20"><circle cx="10" cy="10" r="10" fill="url(#sun)"/></svg><span class="ml-[10px] w-[55px] text-[14px] tracking-[-0.4px]">27°C</span></div>
  <div class="flex items-center w-[164px] shrink-0">
    <svg width="12" height="8" fill="none" stroke="#fff" stroke-width="1.300"><path d="M.5 7L6 1.500 11.500 7"/></svg>
    <svg class="ml-[13px]" width="12" height="16" fill="none" stroke="#fff" stroke-width="1.200"><path d="M1 4.500h7v7H1zM8 7l3-1.500v5L8 9M2 2Q5 0 8 2M2 14q3 2 6 0"/></svg>
    <svg class="ml-[9px]" width="18" height="17" fill="none" stroke="#fff" stroke-width="1.200"><path d="M15 8V1H7L1 3v11l7 1M5 10a3 3 0 1 1 5-3M10 4.500V7H7.500"/><circle cx="13.500" cy="12.500" r="4" fill="#ff9d1e" stroke="none"/></svg>
    <svg class="ml-[6px]" width="17" height="14" fill="none" stroke="#fff"><path d="M5.500 4.500h10v7h-10zM16.500 6v4M2.500 0v3M5.500 0v3M1.500 3h5v2q0 2-2.500 2T1.500 5zM4 7v5"/><path d="M7.500 6H14v4H7z" fill="#fff"/></svg>
    <svg class="ml-[10px]" width="14" height="14" fill="none" stroke="#fff"><path d="M4 13A9 9 0 0 1 13 4.500M7.500 13.500A6 6 0 0 1 13 8M1 12A12 12 0 0 1 12 1"/><circle cx="11.500" cy="12" r="1.500" fill="#fff"/></svg>
    <svg class="ml-[7px]" width="17" height="14" fill="none" stroke="#fff"><path d="M.5 5h3l3-3.500v11L3.500 9h-3zM9 4.500q1.500 2.500 0 5M11.500 3q3 4 0 8M14 1.500q4 5.500 0 11"/></svg>
    <span class="ml-[9px] tracking-[-0.4px]">ENG</span>
  </div>
  <div class="w-[84px] shrink-0 text-center leading-[18px] pt-px tracking-[-0.3px] whitespace-nowrap">11:10 AM<br>4/11/2024</div>
  <svg class="absolute left-[1285px] top-[12px]" width="17" height="16"><path d="M0 0h17v13h-4v3l-4-3H0z" fill="#fff"/><path d="M3 3.500h11M3 6h11M3 8.500h8" stroke="#1c2a44"/></svg>
  <b class="absolute left-[1291px] top-[18px] size-[18px] rounded-full bg-[#27304a] border border-[#89939a] text-[11px] leading-[16px] text-center">7</b>
  <svg class="absolute left-[1322px] top-[10px]" width="22" height="22" viewBox="0 0 22 22"><path d="M5 1h7l-3 12q-1 3-4 3-5 0-4-5z" fill="#1f9de8"/><path d="M10 1h4q2 0 3 4l-5 1z" fill="#2a58d8"/><path d="M13 6h4q4 0 3 4l-2 6H8q2 0 3-3z" fill="#d85bc8"/><path d="M2 9l-1 3q-1 4 4 4z" fill="#f2c230"/><path d="M5 13h15v8H5z" fill="#ffc21a"/><text x="6" y="19.500" font-family="Liberation Sans" font-weight="bold" font-size="6.500" fill="#000">PRE</text></svg>
  <i class="absolute left-[1361px] top-0 w-px h-10 bg-[#4b5570]"></i>
</footer>
</body>
</html>
